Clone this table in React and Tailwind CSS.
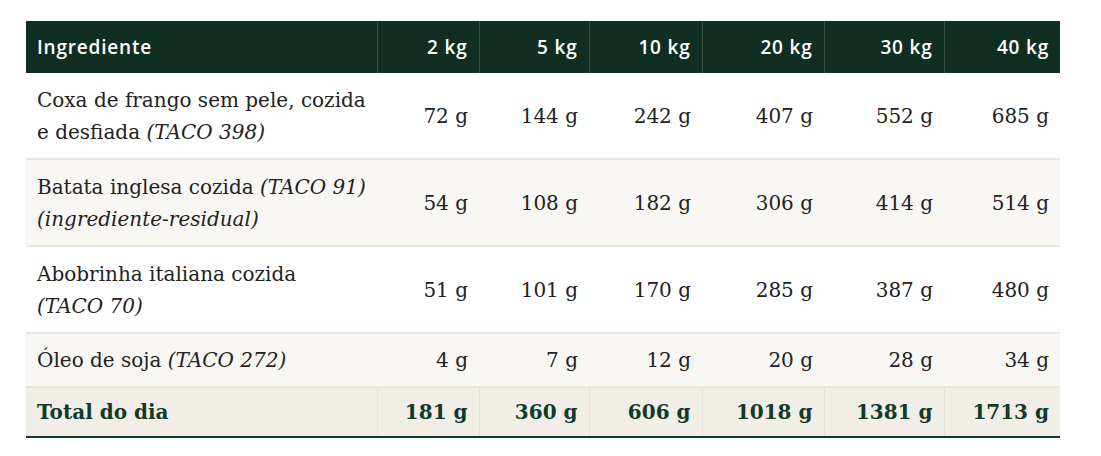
const rows = [
  { lines: [['Coxa de frango sem pele, cozida'], ['e desfiada ', '(TACO 398)']], h: 'h-[86px]', values: ['72 g', '144 g', '242 g', '407 g', '552 g', '685 g'] },
  { lines: [['Batata inglesa cozida ', '(TACO 91)'], ['', '(ingrediente-residual)']], h: 'h-[87px]', values: ['54 g', '108 g', '182 g', '306 g', '414 g', '514 g'] },
  { lines: [['Abobrinha italiana cozida'], ['', '(TACO 70)']], h: 'h-[87px]', values: ['51 g', '101 g', '170 g', '285 g', '387 g', '480 g'] },
  { lines: [['Óleo de soja ', '(TACO 272)']], h: 'h-[54px]', values: ['4 g', '7 g', '12 g', '20 g', '28 g', '34 g'] },
];

const totals = ['181 g', '360 g', '606 g', '1018 g', '1381 g', '1713 g'];
const headers = ['2 kg', '5 kg', '10 kg', '20 kg', '30 kg', '40 kg'];
const widths = ['w-[351px]', 'w-[102px]', 'w-[110px]', 'w-[113px]', 'w-[122px]', 'w-[120px]', 'w-[116px]'];

export default function App() {
  return (
    <div className="bg-white min-h-[456px] pt-[21px] pl-[26px]">
      <table className="table-fixed border-collapse w-[1034px] font-['Georgia','DejaVu_Serif',serif] text-[20px] text-[#222]">
        <colgroup>
          {widths.map(w => <col key={w} className={w} />)}
        </colgroup>
        <thead>
          <tr className="bg-[#102f22] text-white font-['Open_Sans',sans-serif] text-[19px] tracking-[0.8px] h-[52px]">
            <th className="px-[11px] text-left font-semibold">Ingrediente</th>
            {headers.map(h => (
              <th key={h} className="px-[11px] text-right font-semibold border-l border-[#34513f]">{h}</th>
            ))}
          </tr>
        </thead>
        <tbody>
          {rows.map((r, i) => (
            <tr key={i} className={`${i % 2 ? 'bg-[#f9f7f4]' : 'bg-white'} border-b-2 border-[#e9e5dc]`}>
              <td className={`px-[11px] leading-[32px] whitespace-nowrap ${r.h}`}>
                {r.lines.map((l, k) => (
                  <div key={k}>{l[0]}{l[1] && <em>{l[1]}</em>}</div>
                ))}
              </td>
              {r.values.map((v, j) => (
                <td key={j} className="px-[11px] text-right">{v}</td>
              ))}
            </tr>
          ))}
          <tr className="bg-[#f1eee8] border-b-2 border-[#123a2a] text-[#123a2a] font-bold h-[50px]">
            <td className="px-[11px]">Total do dia</td>
            {totals.map(t => (
              <td key={t} className="px-[11px] text-right border-l border-[#e6e2d9]">{t}</td>
            ))}
          </tr>
        </tbody>
      </table>
    </div>
  );
}
